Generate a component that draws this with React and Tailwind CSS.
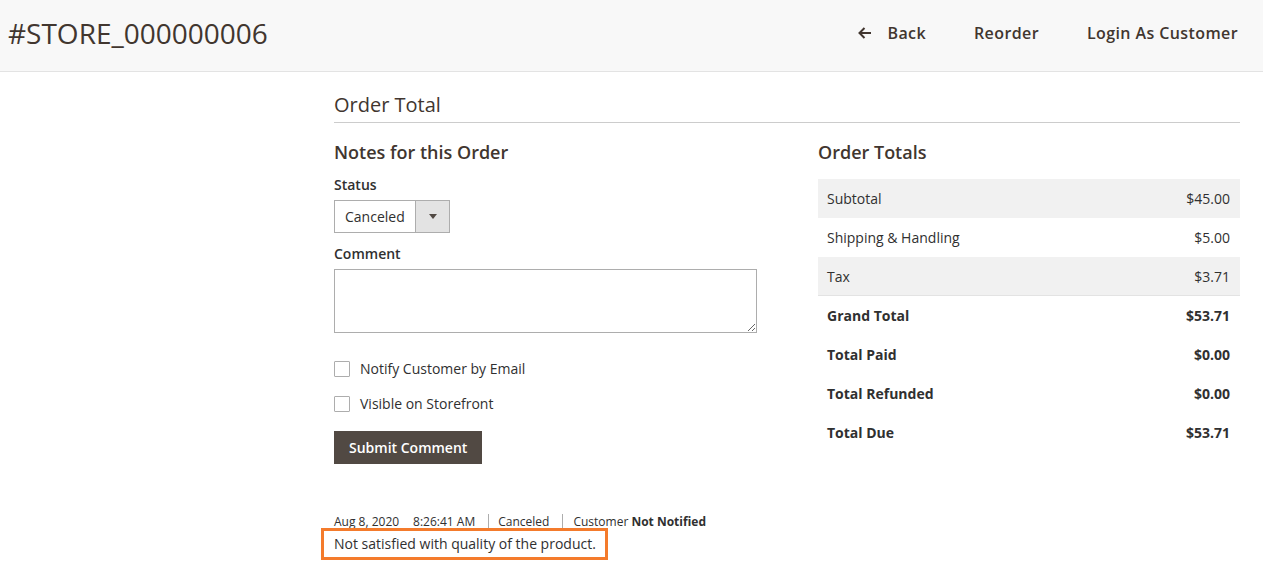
import React from "react";

const font = { fontFamily: '"Open Sans", "Noto Sans", sans-serif' };

const totals = [
  { label: "Subtotal", value: "$45.00", shaded: true },
  { label: "Shipping & Handling", value: "$5.00" },
  { label: "Tax", value: "$3.71", shaded: true, last: true },
];

const grand = [
  { label: "Grand Total", value: "$53.71" },
  { label: "Total Paid", value: "$0.00" },
  { label: "Total Refunded", value: "$0.00" },
  { label: "Total Due", value: "$53.71" },
];

const Checkbox = ({ label }) => (
  <label className="flex items-center gap-[10px] h-[35px] text-[14px] text-[#303030]">
    <span className="w-[16px] h-[16px] border border-[#adadad] bg-white rounded-[1px]" />
    {label}
  </label>
);

export default function App() {
  return (
    <div className="min-h-screen bg-white text-[#303030]" style={font}>
      {/* Page header */}
      <div className="h-[72px] bg-[#f8f8f8] border-b border-[#e3e3e3] flex items-center justify-between pl-[8px] pr-[25px]">
        <h1 className="text-[28px] text-[#41362f] font-normal leading-none pb-[5px]">
          #STORE_000000006
        </h1>
        <div className="flex items-center gap-[48px] text-[16px] font-semibold tracking-[0.4px] text-[#41362f] pb-[6px]">
          <button className="flex items-center gap-[14px]">
            <svg width="16" height="16" viewBox="0 0 16 16" fill="none" stroke="#41362f" strokeWidth="2">
              <path d="M14 8H2.5M7.5 3L2.5 8l5 5" />
            </svg>
            Back
          </button>
          <button>Reorder</button>
          <button>Login As Customer</button>
        </div>
      </div>

      <div className="pl-[334px] pr-[23px]">
        <div className="pt-[20px] pb-[4px] border-b border-[#cccccc]">
          <h2 className="text-[20px] text-[#41362f] font-normal leading-[26px]">Order Total</h2>
        </div>

        <div className="flex pt-[17px]">
          {/* Notes */}
          <div className="w-[484px]">
            <h3 className="text-[18px] font-semibold text-[#41362f] leading-[24px]">Notes for this Order</h3>
            <div className="mt-[11px] text-[14px] font-semibold leading-[20px]">Status</div>
            <div className="mt-[5px] flex w-[116px] h-[33px] border border-[#adadad] bg-white">
              <span className="flex-1 flex items-center pl-[10px] text-[14px]">Canceled</span>
              <span className="w-[34px] border-l border-[#adadad] bg-[#e3e3e3] flex items-center justify-center">
                <svg width="8" height="5" viewBox="0 0 8 5">
                  <path d="M0 0h8L4 5z" fill="#514943" />
                </svg>
              </span>
            </div>
            <div className="mt-[11px] text-[14px] font-semibold leading-[20px]">Comment</div>
            <textarea className="mt-[5px] block w-[423px] h-[64px] border border-[#adadad] bg-white outline-none" />
            <div className="mt-[18px] flex flex-col">
              <Checkbox label="Notify Customer by Email" />
              <Checkbox label="Visible on Storefront" />
            </div>
            <button className="mt-[10px] h-[33px] px-[15px] bg-[#514943] text-white text-[14px] font-semibold">
              Submit Comment
            </button>

            {/* Comment history */}
            <div className="mt-[50px] flex items-center text-[12px] leading-[16px]">
              <span>Aug 8, 2020</span>
              <span className="ml-[14px]">8:26:41 AM</span>
              <span className="ml-[13px] pl-[9px] border-l border-[#adadad]">Canceled</span>
              <span className="ml-[13px] pl-[10px] border-l border-[#adadad]">
                Customer <b className="font-bold">Not Notified</b>
              </span>
            </div>
            <div className="-mt-[2px] -ml-[13px] inline-block border-[3px] border-[#f47b2c] pl-[10px] pr-[9px] py-[3px] text-[14px] leading-[20px]">
              Not satisfied with quality of the product.
            </div>
          </div>

          {/* Totals */}
          <div className="flex-1">
            <h3 className="text-[18px] font-semibold text-[#41362f] leading-[24px]">Order Totals</h3>
            <div className="mt-[15px] text-[14px]">
              {totals.map((r) => (
                <div
                  key={r.label}
                  className={`flex justify-between items-center h-[39px] pl-[9px] pr-[10px] ${r.shaded ? "bg-[#f1f1f1]" : ""} ${r.last ? "border-b border-[#e3e3e3]" : ""}`}
                >
                  <span>{r.label}</span>
                  <span>{r.value}</span>
                </div>
              ))}
              {grand.map((r) => (
                <div key={r.label} className="flex justify-between items-center h-[39px] pl-[9px] pr-[10px] font-bold">
                  <span>{r.label}</span>
                  <span>{r.value}</span>
                </div>
              ))}
            </div>
          </div>
        </div>
      </div>
    </div>
  );
}
